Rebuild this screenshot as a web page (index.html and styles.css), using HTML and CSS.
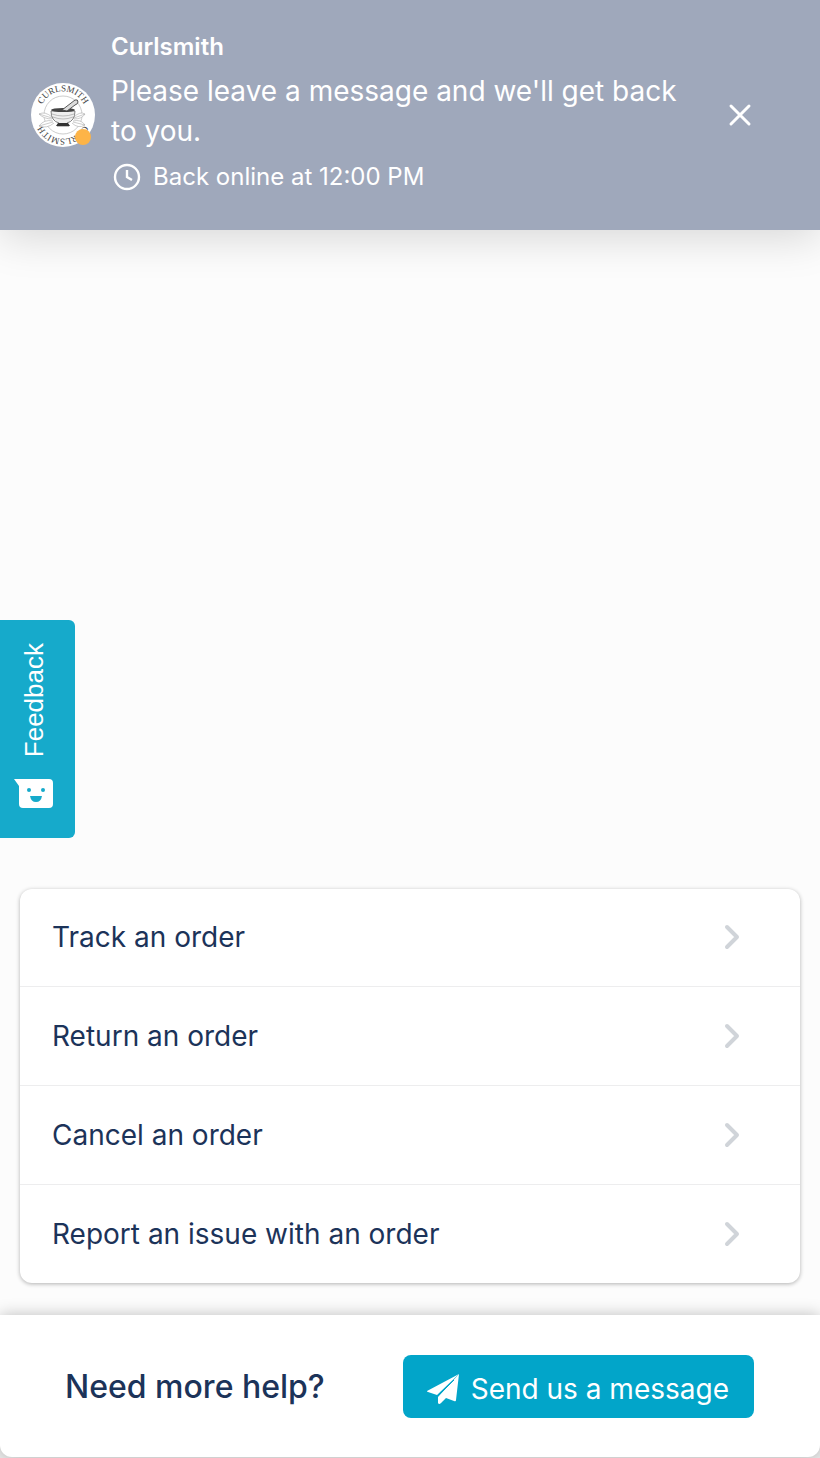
FILE: index.html
```
<!DOCTYPE html>
<html lang="en">
<head>
    <meta charset="UTF-8">
    <meta name="viewport" content="width=device-width, initial-scale=1.0">
    <title>Curlsmith</title>
    <link rel="stylesheet" href="styles.css">
</head>
<body>
    <div class="chat">
        <header class="chat-header">
            <div class="avatar">
                <svg viewBox="0 0 64 64" width="64" height="64" aria-hidden="true">
                    <defs>
                        <path id="ringTop" d="M10 38 A23 23 0 1 1 54 38"/>
                        <path id="ringBottom" d="M54 26 A23 23 0 1 1 10 26"/>
                    </defs>
                    <circle cx="32" cy="32" r="32" fill="#fff"/>
                    <text class="ring-text"><textPath href="#ringTop" startOffset="50%">CURLSMITH</textPath></text>
                    <text class="ring-text"><textPath href="#ringBottom" startOffset="50%">CURLSMITH</textPath></text>
                    <circle cx="32" cy="32" r="19" fill="none" stroke="#aaa" stroke-width="0.6"/>
                    <!-- leaves -->
                    <g fill="#fff" stroke="#aaa" stroke-width="0.6">
                        <path d="M21 34 Q14 28 8 31 Q13 36 21 36 M8 31 L21 35"/>
                        <path d="M22 38 Q13 36 8 43 Q16 46 23 40 M8 43 L22 39"/>
                        <path d="M43 34 Q49 28 54 31 Q51 36 43 36 M54 31 L43 35"/>
                        <path d="M42 38 Q50 36 54 42 Q47 46 41 40 M54 42 L42 39"/>
                    </g>
                    <!-- mortar and pestle -->
                    <path d="M20 28 Q20 38 28 40 L26 43 H38 L36 40 Q44 38 44 28 Z" fill="#eee" stroke="#666" stroke-width="0.8"/>
                    <path d="M27 40 H37 L39 43 H25 Z" fill="#333"/>
                    <ellipse cx="32" cy="27" rx="12" ry="2" fill="#444"/>
                    <path d="M21 31 Q32 35 43 31 M22 34 Q32 38 42 34" fill="none" stroke="#999" stroke-width="0.6"/>
                    <path d="M31 27 L44 17 Q47 16 47 19 Q47 21 44 22 L36 28 Z" fill="#ddd" stroke="#444" stroke-width="0.9"/>
                </svg>
                <span class="status-dot"></span>
            </div>
            <div class="header-text">
                <h1>Curlsmith</h1>
                <p class="greeting">Please leave a message and we'll get back to you.</p>
                <p class="hours">
                    <svg viewBox="0 0 28 28" width="28" height="28" fill="none" stroke="#fff" stroke-width="2.4" aria-hidden="true">
                        <circle cx="14" cy="14" r="12"/>
                        <path d="M14 7 V14 L19 17"/>
                    </svg>
                    Back online at 12:00 PM
                </p>
            </div>
            <button class="close" type="button" aria-label="Close">
                <svg viewBox="0 0 24 24" width="24" height="24" fill="none" stroke="#fff" stroke-width="3" stroke-linecap="round">
                    <path d="M3 3 L21 21 M21 3 L3 21"/>
                </svg>
            </button>
        </header>

        <main class="chat-body">
            <nav class="options">
                <a href="#">Track an order
                    <svg viewBox="0 0 18 28" width="18" height="28"><path d="M4 4 L14 14 L4 24"/></svg>
                </a>
                <a href="#">Return an order
                    <svg viewBox="0 0 18 28" width="18" height="28"><path d="M4 4 L14 14 L4 24"/></svg>
                </a>
                <a href="#">Cancel an order
                    <svg viewBox="0 0 18 28" width="18" height="28"><path d="M4 4 L14 14 L4 24"/></svg>
                </a>
                <a href="#">Report an issue with an order
                    <svg viewBox="0 0 18 28" width="18" height="28"><path d="M4 4 L14 14 L4 24"/></svg>
                </a>
            </nav>
        </main>

        <footer class="chat-footer">
            <h2>Need more help?</h2>
            <button class="send" type="button">
                <svg viewBox="0 0 32 32" width="32" height="32" fill="#fff" aria-hidden="true">
                    <path d="M0 18 L32 1 L10 22 L1 19 Q0 19 0 18 Z"/>
                    <path d="M32 1 L29 27 Q29 29 27 28 L19 25 L14 30 Q12 32 11 30 L11 24 Z"/>
                    <path d="M11 23 L27 7" stroke="#02a5c9" stroke-width="1"/>
                </svg>
                Send us a message
            </button>
        </footer>
    </div>

    <button class="feedback" type="button">
        <span>Feedback</span>
        <svg viewBox="0 0 40 30" width="40" height="30" aria-hidden="true">
            <path d="M0 0 H35 Q39 0 39 4 V25 Q39 29 35 29 H9 Q5 29 5 25 V7 Z" fill="#fff"/>
            <circle cx="15" cy="11" r="2" fill="#16aacb"/>
            <circle cx="29" cy="11" r="2" fill="#16aacb"/>
            <path d="M16 17 H28 Q27 23 22 23 Q17 23 16 17 Z" fill="#16aacb"/>
        </svg>
    </button>
</body>
</html>
```
FILE: styles.css
```
* {
    box-sizing: border-box;
}
body {
    margin: 0;
    background-color: #ececec;
    color: #1c3359;
    font-family: Inter, "Liberation Sans", sans-serif;
    font-size: 28px;
}
h1, h2, p {
    margin: 0;
}
button {
    border: none;
    padding: 0;
    font: inherit;
    color: #fff;
    cursor: pointer;
}
svg {
    display: block;
    flex-shrink: 0;
}
.chat {
    display: flex;
    flex-direction: column;
    min-height: 100vh;
    padding-bottom: 1px;
}

/* header */
.chat-header {
    display: flex;
    align-items: center;
    gap: 16px;
    padding: 35px 64px 35px 31px;
    background-color: #9fa8bb;
    color: #fff;
    box-shadow: 0 8px 40px rgba(0, 0, 0, 0.15);
    z-index: 1;
}
.avatar {
    position: relative;
    flex-shrink: 0;
}
.ring-text {
    font-family: "Liberation Serif", serif;
    font-size: 9px;
    fill: #444;
    text-anchor: middle;
}
.status-dot {
    position: absolute;
    right: 4px;
    bottom: 2px;
    width: 16px;
    height: 16px;
    border-radius: 50%;
    background-color: #fdb447;
}
.header-text {
    flex: 1;
}
.header-text h1 {
    font-size: 24px;
    line-height: 24px;
    font-weight: 600;
}
.greeting {
    max-width: 580px;
    margin: 12px 0 8px;
    line-height: 40px;
}
.hours {
    display: flex;
    align-items: center;
    gap: 12px;
    padding-left: 2px;
    font-size: 24px;
    line-height: 36px;
}
.close {
    display: flex;
    align-items: center;
    justify-content: center;
    width: 32px;
    height: 32px;
    background: none;
}

/* quick options */
.chat-body {
    flex: 1;
    display: flex;
    flex-direction: column;
    justify-content: flex-end;
    padding: 32px 20px;
    background-color: #fcfcfc;
}
.options {
    border-radius: 12px;
    background-color: #fff;
    box-shadow: 0 1px 4px rgba(0, 0, 0, 0.3);
}
.options a {
    display: flex;
    align-items: center;
    justify-content: space-between;
    padding: 32px 59px 32px 32px;
    line-height: 34px;
    color: inherit;
    text-decoration: none;
}
.options a:first-child {
    padding-top: 31px;
}
.options a + a {
    border-top: 1px solid #ededee;
}
.options path {
    fill: none;
    stroke: #d0d4d9;
    stroke-width: 4;
    stroke-linecap: round;
    stroke-linejoin: round;
}

/* footer */
.chat-footer {
    display: flex;
    align-items: center;
    justify-content: space-between;
    padding: 40px 66px 39px 65px;
    border-radius: 0 0 12px 12px;
    background-color: #fff;
    box-shadow: 0 0 16px rgba(0, 0, 0, 0.25);
}
.chat-footer h2 {
    font-size: 32px;
    font-weight: 500;
}
.send {
    display: flex;
    align-items: center;
    gap: 12px;
    height: 63px;
    padding: 4px 25px 0 24px;
    border-radius: 8px;
    background-color: #02a5c9;
}

/* feedback tab on the left edge */
.feedback {
    position: fixed;
    top: 50%;
    left: 0;
    z-index: 2;
    transform: translateY(-50%);
    display: flex;
    flex-direction: column;
    align-items: center;
    justify-content: space-between;
    width: 75px;
    height: 218px;
    padding: 23px 8px 29px 0;
    border-radius: 0 6px 6px 0;
    background-color: #16aacb;
}
.feedback span {
    writing-mode: vertical-rl;
    transform: rotate(180deg);
    font-family: "Liberation Sans", sans-serif;
    font-size: 26px;
    line-height: 30px;
}
```
